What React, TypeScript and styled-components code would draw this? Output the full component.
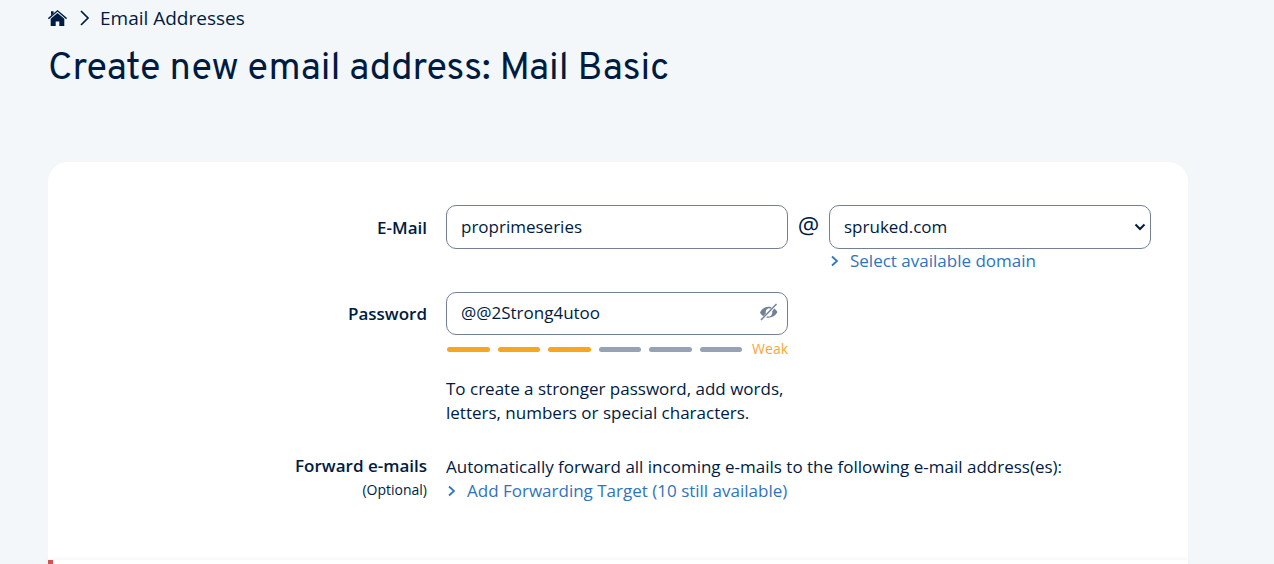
import React, { useState } from "react";
import styled, { createGlobalStyle } from "styled-components";

const navy = "#001b41";
const link = "#2f74ba";
const border = "#718095";

const GlobalStyle = createGlobalStyle`
  *, *::before, *::after { box-sizing: border-box; }
  body {
    margin: 0;
    background: #f3f7fa;
    color: ${navy};
    font: 400 17px/24px "Open Sans", "Noto Sans", sans-serif;
  }
  h1, p { margin: 0; }
`;

const Page = styled.div`
  display: flex;
  flex-direction: column;
  min-height: 100vh;
  padding: 6px 86px 0 48px;
`;

const Breadcrumb = styled.nav`
  display: flex;
  align-items: center;
  height: 24px;
  font-size: 19px;

  a { display: flex; color: inherit; text-decoration: none; }
  svg { flex: none; }
`;

const Separator = styled.svg`
  margin: 0 10px 0 12px;
`;

const Title = styled.h1`
  margin-top: 16px;
  font: 400 38px/48px Overpass, Roboto, sans-serif;
`;

const Card = styled.main`
  display: flex;
  flex-direction: column;
  flex: 1;
  margin-top: 68px;
  background: #fff;
  border-radius: 20px 20px 0 0;
`;

const Form = styled.form`
  padding: 43px 37px 57px 0;
`;

const Row = styled.div<{ $gap: number }>`
  display: grid;
  grid-template-columns: 398px minmax(0, 342fr) 41px minmax(0, 322fr);
  margin-bottom: ${({ $gap }) => $gap}px;
`;

const LabelCell = styled.div<{ $top: number }>`
  padding: ${({ $top }) => $top}px 19px 0 0;
  text-align: right;
  font-weight: 600;
`;

const Label = styled.label`
  display: block;
`;

const Field = styled.div``;

const WideField = styled.div`
  grid-column: 2 / -1;
  padding-top: 1px;
`;

const At = styled.span`
  padding-top: 5px;
  text-align: center;
  font-size: 24px;
  line-height: 30px;
`;

const controlStyle = `
  display: block;
  width: 100%;
  height: 44px;
  border: 1px solid ${border};
  border-radius: 10px;
  background: #fff;
  color: ${navy};
  font: inherit;
  outline: none;
`;

const Input = styled.input`
  ${controlStyle}
  padding: 0 14px 2px;
`;

const PasswordBox = styled.div`
  position: relative;

  input { height: 43px; padding-right: 40px; }
`;

const EyeButton = styled.button`
  position: absolute;
  top: 10px;
  right: 8px;
  display: flex;
  padding: 0;
  border: 0;
  background: none;
  color: ${border};
`;

const SelectBox = styled.div`
  display: flex;
  align-items: center;
`;

const Select = styled.select`
  ${controlStyle}
  appearance: none;
  padding: 0 32px 0 14px;
`;

const SelectArrow = styled.svg`
  flex: none;
  margin-left: -17px;
  margin-right: 5px;
  pointer-events: none;
`;

const ActionLink = styled.a`
  display: flex;
  align-items: center;
  width: max-content;
  color: ${link};
  text-decoration: none;

  svg { margin: 0 10px 0 1px; }
`;

const Meter = styled.div`
  display: flex;
  align-items: center;
  gap: 8px;
  height: 20px;
  margin-top: 4px;
  padding-left: 1px;
`;

const Bar = styled.span<{ $on: boolean }>`
  flex: 1;
  height: 5px;
  border-radius: 3px;
  background: ${({ $on }) => ($on ? "#f9a61f" : "#96a3b5")};
`;

const Strength = styled.span`
  margin-left: 2px;
  color: #f9a63a;
  font-size: 14px;
  line-height: 20px;
`;

const Hint = styled.p`
  margin-top: 18px;
`;

const Optional = styled.span`
  display: block;
  font-size: 14px;
  font-weight: 400;
`;

const Notice = styled.section`
  flex: 1;
  min-height: 4px;
  border-left: 5px solid #d05252;
  box-shadow: 0 -1px 4px rgba(0, 0, 0, 0.05);
`;

const HomeIcon = () => (
  <svg width="20" height="18" viewBox="0 0 20 18" fill="none">
    <path d="M.4 9.600 9.500 1.800l9.100 7.800" stroke="currentColor" strokeWidth="1.400" />
    <path d="M3 2.300h2.600v2L3 6.500zM9.500 4l6.800 5.800V17h-5v-4.500H7.700V17h-5V9.800z" fill="currentColor" />
  </svg>
);

const LinkArrow = () => (
  <svg width="10" height="12" viewBox="0 0 10 12" fill="none">
    <path d="m2 1.500 5 4.500-5 4.500" stroke="currentColor" strokeWidth="1.700" />
  </svg>
);

const HiddenEyeIcon = () => (
  <svg width="22" height="20" viewBox="0 0 22 20" fill="none">
    <path
      d="M13.500 5.300C8.500 3.800 4.500 6 2 10.500c1 1.800 2 3 3.300 3.800l2.500-2.900C7.300 8.600 8.700 6.400 11 6.200c.7 0 1.200.2 1.600.5z"
      fill="currentColor"
    />
    <path
      d="M8.200 15.500c4.800 1 8.800-1.200 11.300-5.500-.9-1.500-2-2.600-3.200-3.400l-2.100 2.700c.5 2.700-1 5.200-3.300 5.300-.6 0-1.100-.1-1.500-.4z"
      fill="currentColor"
    />
    <path d="m3 18 15.500-16" stroke="currentColor" strokeWidth="1.500" />
  </svg>
);

export default function App() {
  const [email, setEmail] = useState("proprimeseries");
  const [password, setPassword] = useState("@@2Strong4utoo");
  const [visible, setVisible] = useState(true);

  return (
    <>
      <GlobalStyle />
      <Page>
        <Breadcrumb aria-label="Breadcrumb">
          <a href="#home" aria-label="Home"><HomeIcon /></a>
          <Separator width="10" height="18" viewBox="0 0 10 18" fill="none">
            <path d="m1 2 7 7-7 7" stroke="currentColor" strokeWidth="1.700" />
          </Separator>
          <a href="#addresses">Email Addresses</a>
        </Breadcrumb>
        <Title>Create new email address: Mail Basic</Title>
        <Card>
          <Form>
            <Row $gap={19}>
              <LabelCell $top={11}><Label htmlFor="email">E-Mail</Label></LabelCell>
              <Field>
                <Input id="email" value={email} onChange={(e) => setEmail(e.target.value)} />
              </Field>
              <At>@</At>
              <Field>
                <SelectBox>
                  <Select aria-label="Domain" defaultValue="spruked.com">
                    <option>spruked.com</option>
                  </Select>
                  <SelectArrow width="12" height="8" viewBox="0 0 12 8" fill="none">
                    <path d="m1.500 1.500 4.500 4.500 4.500-4.500" stroke={navy} strokeWidth="2" />
                  </SelectArrow>
                </SelectBox>
                <ActionLink href="#domain"><LinkArrow />Select available domain</ActionLink>
              </Field>
            </Row>
            <Row $gap={29}>
              <LabelCell $top={10}><Label htmlFor="password">Password</Label></LabelCell>
              <Field>
                <PasswordBox>
                  <Input
                    id="password"
                    type={visible ? "text" : "password"}
                    value={password}
                    onChange={(e) => setPassword(e.target.value)}
                  />
                  <EyeButton type="button" aria-label="Toggle password visibility" onClick={() => setVisible(!visible)}>
                    <HiddenEyeIcon />
                  </EyeButton>
                </PasswordBox>
                <Meter>
                  {[0, 1, 2, 3, 4, 5].map((i) => <Bar key={i} $on={i < 3} />)}
                  <Strength>Weak</Strength>
                </Meter>
                <Hint>To create a stronger password, add words, letters, numbers or special characters.</Hint>
              </Field>
            </Row>
            <Row $gap={0}>
              <LabelCell $top={0}>
                Forward e-mails
                <Optional>(Optional)</Optional>
              </LabelCell>
              <WideField>
                <p>Automatically forward all incoming e-mails to the following e-mail address(es):</p>
                <ActionLink href="#forwarding"><LinkArrow />Add Forwarding Target (10 still available)</ActionLink>
              </WideField>
            </Row>
          </Form>
          <Notice />
        </Card>
      </Page>
    </>
  );
}
